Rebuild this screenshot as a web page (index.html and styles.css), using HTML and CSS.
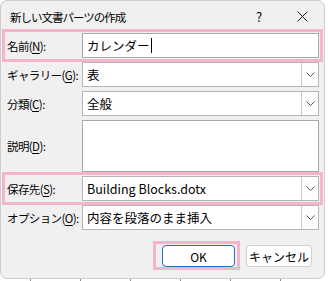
FILE: index.html
```html
<!DOCTYPE html>
<html lang="ja">
<head>
    <meta charset="UTF-8">
    <title>新しい文書パーツの作成</title>
    <link rel="stylesheet" href="styles.css">
</head>
<body>

    <div class="dialog">
        <div class="titlebar">
            <span class="title">新しい文書パーツの作成</span>
            <span class="help">?</span>
            <span class="close">
                <svg width="11" height="11" viewBox="0 0 11 11"><path d="M0.5 0.5 L10.5 10.5 M10.5 0.5 L0.5 10.5" stroke="#1a1a1a" stroke-width="1" fill="none"/></svg>
            </span>
        </div>

        <div class="form">
            <div class="row hl">
                <label>名前(<u>N</u>):</label>
                <div class="field">カレンダー<span class="caret"></span></div>
            </div>
            <div class="row">
                <label>ギャラリー(<u>G</u>):</label>
                <div class="field combo">表<span class="drop"><svg width="9" height="5" viewBox="0 0 9 5"><polyline points="0.5,0.5 4.5,4.5 8.5,0.5" stroke="#555" fill="none"/></svg></span></div>
            </div>
            <div class="row">
                <label>分類(<u>C</u>):</label>
                <div class="field combo">全般<span class="drop"><svg width="9" height="5" viewBox="0 0 9 5"><polyline points="0.5,0.5 4.5,4.5 8.5,0.5" stroke="#555" fill="none"/></svg></span></div>
            </div>
            <div class="row">
                <label>説明(<u>D</u>):</label>
                <div class="field memo"></div>
            </div>
            <div class="row hl">
                <label>保存先(<u>S</u>):</label>
                <div class="field combo">Building Blocks.dotx<span class="drop"><svg width="9" height="5" viewBox="0 0 9 5"><polyline points="0.5,0.5 4.5,4.5 8.5,0.5" stroke="#555" fill="none"/></svg></span></div>
            </div>
            <div class="row">
                <label>オプション(<u>O</u>):</label>
                <div class="field combo">内容を段落のまま挿入<span class="drop"><svg width="9" height="5" viewBox="0 0 9 5"><polyline points="0.5,0.5 4.5,4.5 8.5,0.5" stroke="#555" fill="none"/></svg></span></div>
            </div>
        </div>

        <div class="buttons">
            <span class="ok-wrap"><button class="btn default">OK</button></span>
            <button class="btn">キャンセル</button>
        </div>
    </div>

    <div class="ruler"></div>

</body>
</html>
```

FILE: styles.css
```css
body {
    margin: 0;
    background-color: white;
    font-family: "Noto Sans CJK JP", "Noto Sans", sans-serif;
    font-size: 12px;
    color: #000;
}

.dialog {
    box-sizing: border-box;
    width: 325px;
    height: 279px;
    background-color: #f0f0f0;
    border: 1px solid #cdcdcd;
    border-radius: 7px;
    display: flex;
    flex-direction: column;
}

.titlebar {
    height: 31px;
    display: flex;
    align-items: center;
    padding-left: 9px;
}

.title {
    flex: 1;
    font-size: 11.5px;
    letter-spacing: -1px;
}

.help {
    width: 16px;
    font-size: 13px;
    text-align: center;
    margin-right: 30px;
}

.close {
    display: flex;
    margin-right: 16px;
}

.form {
    display: flex;
    flex-direction: column;
    gap: 2px;
    padding-left: 4px;
    width: 315px;
}

.row {
    display: flex;
    align-items: center;
    padding: 1px 1px 1px 2px;
}

.row.hl {
    outline: 3px solid #f4b4c9;
}

.row label {
    flex-shrink: 0;
    width: 75px;
    white-space: nowrap;
    font-size: 11.5px;
    letter-spacing: -0.6px;
}

u {
    text-underline-offset: 2px;
}

.field {
    flex: 1;
    box-sizing: border-box;
    height: 25px;
    background-color: white;
    border: 1px solid #a9a9a9;
    display: flex;
    align-items: center;
    padding-left: 4px;
    font-size: 12.5px;
    white-space: nowrap;
}

.caret {
    display: inline-block;
    width: 1px;
    height: 15px;
    background-color: #000;
    margin-left: 1px;
}

.combo {
    position: relative;
    border-color: #b5b5b5;
}

.drop {
    position: absolute;
    top: 0;
    right: 0;
    bottom: 0;
    width: 16px;
    border-left: 1px solid #c9c9c9;
    background-color: #fdfdfd;
    display: flex;
    align-items: center;
    justify-content: center;
}

.memo {
    height: 52px;
}

.buttons {
    display: flex;
    justify-content: flex-end;
    align-items: flex-start;
    padding-right: 12px;
    margin-top: 10px;
}

.ok-wrap {
    display: flex;
    border: 3px solid #f4b4c9;
    padding: 1px 2px 0 6px;
}

.btn {
    box-sizing: border-box;
    height: 22px;
    background-color: white;
    border: 1px solid #d0d0d0;
    border-radius: 4px;
    font-family: "Noto Sans CJK JP", "Noto Sans", sans-serif;
    font-size: 12px;
    color: #000;
    padding: 0;
    width: 66px;
    margin-top: 4px;
    margin-left: 6px;
}

.btn.default {
    width: 73px;
    border-color: #1c6fb8;
    margin: 0;
}

.ruler {
    height: 2px;
    background-image: repeating-linear-gradient(to right, transparent 0, transparent 30px, #888 30px, #888 31px, transparent 31px, transparent 50px);
}
```
